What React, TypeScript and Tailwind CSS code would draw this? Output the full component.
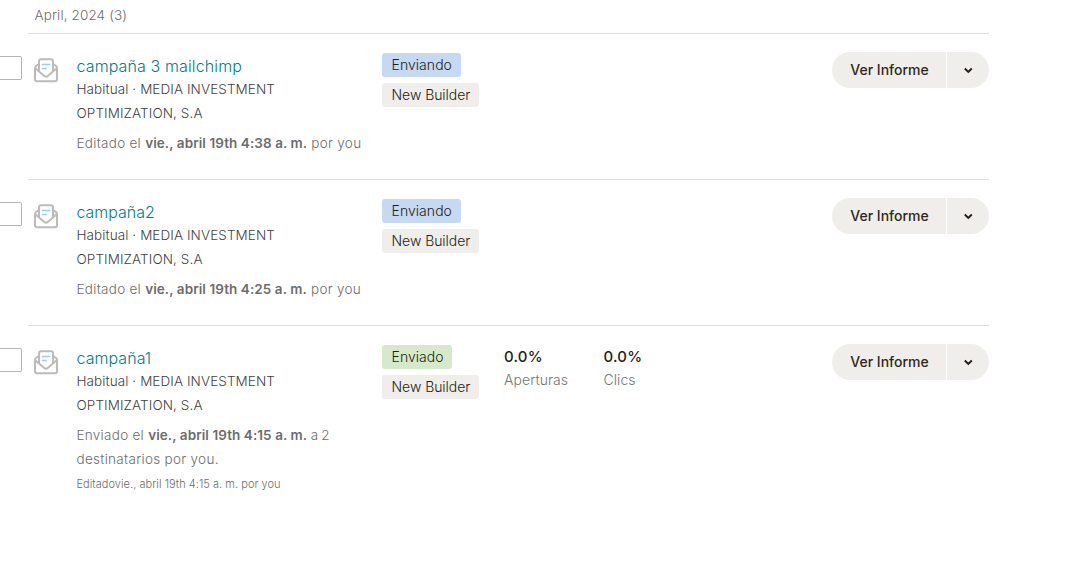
import React from 'react';

type Campaign = {
  title: string;
  titleClass: string;
  status: string;
  statusClass: string;
  sentTo?: boolean;
  time: string;
};

const campaigns: Campaign[] = [
  { title: 'campaña 3 mailchimp', titleClass: 'tracking-[0.12px]', status: 'Enviando', statusClass: 'w-[79px] bg-[#c5daf2]', time: '4:38' },
  { title: 'campaña2', titleClass: 'tracking-[-0.03px]', status: 'Enviando', statusClass: 'w-[79px] bg-[#c5daf2]', time: '4:25' },
  { title: 'campaña1', titleClass: 'tracking-[0.05px]', status: 'Enviado', statusClass: 'w-[70px] bg-[#d6eacb]', sentTo: true, time: '4:15' },
];

function EnvelopeIcon() {
  return (
    <svg width="24" height="25" viewBox="0 0 24 25" fill="none" strokeLinecap="round" strokeLinejoin="round" className="mt-6 ml-3 shrink-0">
      <path d="M5 13V3.3Q5 1.3 7 1.3H17Q19 1.3 19 3.3V13" stroke="#bdbbb9" strokeWidth="2" />
      <path d="M4.5 6.2L2 8Q1 8.7 1 9.8V21.3Q1 23.3 3 23.3H21Q23 23.3 23 21.3V9.8Q23 8.7 22 8L19.5 6.2" stroke="#bdbbb9" strokeWidth="2" />
      <path d="M1.5 10.6L10.3 18Q12 19.3 13.7 18L22.5 10.6" stroke="#bdbbb9" strokeWidth="2" />
      <path d="M8.6 6.5H15.6M8.6 10.5H12" stroke="#92d0eb" strokeWidth="1.7" />
    </svg>
  );
}

function ReportButton() {
  return (
    <div className="mt-[18px] flex h-9 w-[157px] shrink-0 gap-px">
      <button className="h-9 w-[114px] rounded-l-full bg-[#efeeea] pl-px text-sm font-medium whitespace-nowrap text-[#2e2720]">
        Ver Informe
      </button>
      <button aria-label="Más opciones" className="flex h-9 w-[42px] items-center justify-center rounded-r-full bg-[#efeeea]">
        <svg width="10" height="7" viewBox="0 0 10 7" fill="none" className="mt-px">
          <path d="M1.8 1.5L5.3 5L8.8 1.5" stroke="#241c15" strokeWidth="1.9" />
        </svg>
      </button>
    </div>
  );
}

function Stat({ label, className }: { label: string; className: string }) {
  return (
    <div className={className}>
      <div className="text-[15px] leading-6 font-medium tracking-[0.2px] text-[#241c15]">0.0%</div>
      <div className="-mt-px text-[14px] leading-6 font-light tracking-[0.06px] text-[#757575]">{label}</div>
    </div>
  );
}

function Row({ c }: { c: Campaign }) {
  return (
    <div className="flex">
      <div className="mt-[22px] h-6 w-[22px] shrink-0 rounded-r-[2px] border border-l-0 border-[#b5b4b2]" />
      <EnvelopeIcon />
      <div className="mt-5 ml-[18px] w-[306px] shrink-0 pl-[0.5px] whitespace-nowrap">
        <div className={`h-[23px] text-base leading-6 font-[360] text-[#007c89] ${c.titleClass}`}>{c.title}</div>
        <div className="text-[13.5px] leading-6 font-[350] tracking-[0.09px] text-[#3f3f3f]">
          Habitual · MEDIA INVESTMENT
          <br />
          OPTIMIZATION, S.A
        </div>
        <div className="mt-1.5 text-[13.5px] leading-6 font-[350] tracking-[0.28px] text-[#6c6c6c]">
          {c.sentTo ? 'Enviado' : 'Editado'} el{' '}
          <span className="font-semibold tracking-[0.08px]">vie., abril 19th {c.time} a. m.</span>
          <span className={c.sentTo ? 'tracking-[-0.3px]' : 'tracking-[0.3px]'}> {c.sentTo ? 'a 2' : 'por you'}</span>
          {c.sentTo && (
            <>
              <br />
              <span className="tracking-[0.3px]">destinatarios por you.</span>
            </>
          )}
        </div>
        {c.sentTo && (
          <div className="mt-px text-[11px] leading-6 font-[350] tracking-[0.04px] text-[#6c6c6c]">Editadovie., abril 19th 4:15 a. m. por you</div>
        )}
      </div>
      <div className="mt-[19px] flex w-[122px] shrink-0 flex-col items-start gap-1.5 text-[14px] leading-6 font-light whitespace-nowrap text-[#241c15]">
        <span className={`h-6 rounded-[3px] pl-[9.5px] tracking-[0.05px] ${c.statusClass}`}>{c.status}</span>
        <span className="h-6 w-[97px] rounded-[3px] bg-[#efeeea] pl-[9.5px] tracking-[-0.05px]">New Builder</span>
      </div>
      <div className="mt-[19px] flex w-[328px] shrink-0">
        {c.sentTo && (
          <>
            <Stat label="Aperturas" className="w-[99.5px]" />
            <Stat label="Clics" className="w-[99px]" />
          </>
        )}
      </div>
      <ReportButton />
    </div>
  );
}

export default function App() {
  return (
    <main className="h-[565px] w-[1075px] overflow-hidden bg-white font-['Inter','Liberation_Sans',sans-serif]">
      <h2 className="h-[33px] pl-[34.5px] text-[13.5px] leading-[30px] font-[350] tracking-[0.13px] text-[#6c6c6c]">April, 2024 (3)</h2>
      {campaigns.map((c) => (
        <section key={c.title} className="h-[146px]">
          <div className="ml-7 h-px w-[961px] bg-[#dfdfdd]" />
          <Row c={c} />
        </section>
      ))}
    </main>
  );
}
